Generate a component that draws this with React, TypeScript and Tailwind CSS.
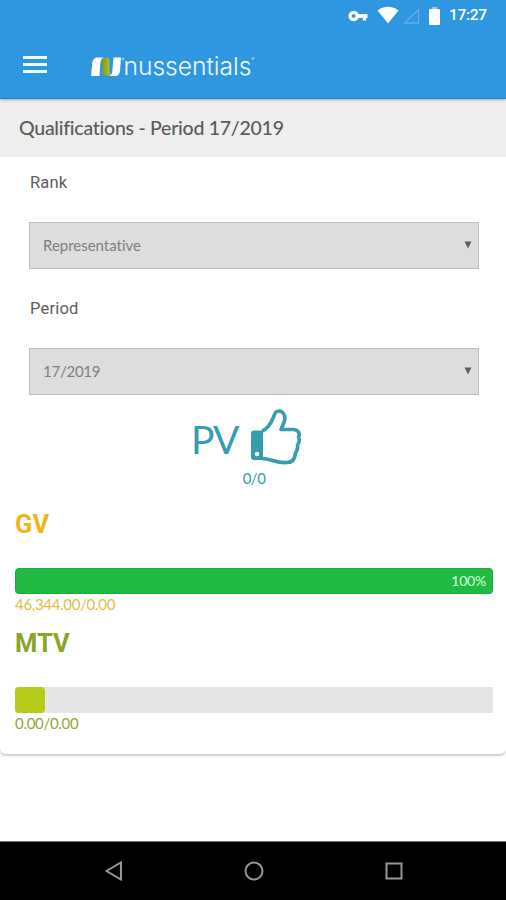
import React from 'react';

interface SelectFieldProps {
  label: string;
  value: string;
  valueClass: string;
}

const SelectField: React.FC<SelectFieldProps> = ({ label, value, valueClass }) => {
  return (
    <div className="h-[126px] px-[29px] pt-[14px]">
      <div className="h-6 pl-px font-[Roboto] text-[16.5px] leading-6 tracking-[0.2px] text-[#5c5c5c]">{label}</div>
      <button className="mt-[27px] flex h-[47px] w-[450px] items-center justify-between border border-[#bcbcbc] bg-[#dddddd] pr-[6px] pl-[13px] text-[#808080]">
        <span className={valueClass}>{value}</span>
        <svg className="mb-px" width="8" height="8" viewBox="0 0 8 8" fill="#606060">
          <path d="M0.5 0.5h7L4 7.5z" />
        </svg>
      </button>
    </div>
  );
};

const StatusBar: React.FC = () => {
  return (
    <div className="flex h-8 items-center pr-[18px] pl-[348px] text-white">
      <svg width="20" height="12" viewBox="0 0 20 12" fill="none" stroke="currentColor">
        <circle cx="5.7" cy="6" r="3.6" strokeWidth="3.4" />
        <path d="M9 6h10.5" strokeWidth="3.8" />
        <path d="M16.4 6v4.5" strokeWidth="3.4" />
      </svg>
      <svg className="-mt-[2px] ml-[9px]" width="22" height="18" viewBox="0 0 22 18" fill="currentColor">
        <path d="M0.5 4.5C6.5-.5 15.5-.5 21.5 4.5L11 17.5z" />
      </svg>
      <svg className="-mt-[1px] ml-1" width="17" height="16" viewBox="0 0 17 16" fill="none" stroke="#64afe8" strokeWidth="1.3">
        <path d="M1.5 15L15.5 1.5V15z" />
      </svg>
      <svg className="-mt-[1px] ml-[9px]" width="11" height="18" viewBox="0 0 11 18" fill="currentColor">
        <path d="M3 0h5v2.5H3z" opacity=".5" />
        <rect y="2" width="11" height="16" rx="1" />
      </svg>
      <span className="ml-[9px] font-[Roboto] text-[15.5px] font-medium tracking-[-0.3px]">17:27</span>
    </div>
  );
};

const Logo: React.FC = () => {
  return (
    <svg width="170" height="38" viewBox="0 -6 170 38">
      <defs>
        <linearGradient id="band" x1="0" y1="0" x2="1" y2="0">
          <stop offset="0" stopColor="#7c9a20" />
          <stop offset="1" stopColor="#bac62b" />
        </linearGradient>
      </defs>
      <path d="M0 22L1.200 9Q2 3.500 6.500 3.500H12.500Q9.500 5 9.200 10L8.500 22z" fill="#fff" />
      <path d="M11 6.500Q12 3.500 15 3.500Q18.800 3.500 18.500 8V15.500Q18.500 19.500 20 21.500H14.500Q11 20.500 11 16z" fill="url(#band)" />
      <path d="M22.500 3.500h7.500l-1 13.500Q28.300 22 24 22h-5.500Q21.300 20.500 21.500 15.500z" fill="#fff" />
      <text x="32.500" y="21" fill="#effaff" fontFamily="Inter, sans-serif" fontSize="24" fontWeight="300" textLength="128" lengthAdjust="spacingAndGlyphs">
        nussentials
      </text>
      <circle cx="32" cy="5" r="1" fill="none" stroke="#d5ecfb" strokeWidth=".7" />
      <circle cx="162" cy="4.500" r="1" fill="none" stroke="#d5ecfb" strokeWidth=".7" />
    </svg>
  );
};

const AppBar: React.FC = () => {
  return (
    <div className="flex h-[66px] items-center pl-[23px]">
      <svg width="24" height="18" viewBox="0 0 24 18" fill="#eefbff">
        <path d="M0 0h24v3H0zM0 7h24v3H0zM0 14h24v3H0z" />
      </svg>
      <div className="ml-[43.5px] pt-[3px]">
        <Logo />
      </div>
    </div>
  );
};

const ThumbsUp: React.FC = () => {
  return (
    <svg width="52" height="56" viewBox="0 0 52 56" fill="none">
      <path
        d="M12 22C18 20 22 12 24 7C25 3 26 2 29 2C33 2 36 7 34.500 12L31 20.500H43C49 20.500 50 25 48.500 28C50 31 49 34 47.500 36C48 39 47 42 45.500 44C45 50 42 53.500 37 53.500C26 54.500 21 49.500 12 49.500"
        stroke="#369dad"
        strokeWidth="3.600"
        strokeLinejoin="round"
      />
      <path d="M4 21.500h9v29.500H4Q1 51 1 48V24.500Q1 21.500 4 21.500z" fill="#369dad" />
      <circle cx="7" cy="45" r="2.200" fill="#fff" />
    </svg>
  );
};

interface MeterProps {
  title: string;
  value: string;
  titleClass: string;
  valueClass: string;
  bar: React.ReactNode;
}

const Meter: React.FC<MeterProps> = ({ title, value, titleClass, valueClass, bar }) => {
  return (
    <div className="h-[119px] pr-[13px] pl-[15px]">
      <h2 className={`h-8 font-[Roboto] text-[25.5px] leading-8 font-bold ${titleClass}`}>{title}</h2>
      <div className="mt-[28px] flex h-[26px] bg-[#e6e6e6]">{bar}</div>
      <p className={`h-5 text-[15px] leading-5 tracking-[-0.3px] ${valueClass}`}>{value}</p>
    </div>
  );
};

const NavigationBar: React.FC = () => {
  return (
    <div className="flex h-[59px] items-center justify-between border-t border-[#777] bg-black pr-[103px] pl-[105px]">
      <svg width="18" height="20" viewBox="0 0 18 20" fill="none" stroke="#969696" strokeWidth="2">
        <path d="M16 1.500v17L1.500 10z" />
      </svg>
      <svg width="20" height="20" viewBox="0 0 20 20" fill="none" stroke="#969696" strokeWidth="2">
        <circle cx="10" cy="10" r="8.500" />
      </svg>
      <svg width="18" height="18" viewBox="0 0 18 18" fill="none" stroke="#969696" strokeWidth="2">
        <rect x="1.500" y="1.500" width="15" height="15" />
      </svg>
    </div>
  );
};

const App: React.FC = () => {
  return (
    <div className="flex h-[900px] w-[506px] flex-col overflow-hidden bg-white font-[Lato]">
      <header className="relative h-[99px] shrink-0 border-b border-[#2583c4] bg-[#2f97df] shadow-[0_1px_3px_rgba(0,0,0,0.3)]">
        <StatusBar />
        <AppBar />
      </header>
      <main className="h-[656px] shrink-0 rounded-b-md border-b border-[#cfcfcf] shadow-[0_1px_2px_rgba(0,0,0,0.2)]">
        <h1 className="flex h-[58px] items-center bg-[#eeeeee] pl-[19px] text-[19.5px] font-medium tracking-[-0.26px] text-[#5b5b5b]">
          Qualifications - Period 17/2019
        </h1>
        <SelectField label="Rank" value="Representative" valueClass="text-[15px] tracking-[-0.02px]" />
        <SelectField label="Period" value="17/2019" valueClass="text-[15px] tracking-[-0.25px]" />
        <div className="h-[99px] text-[#369dad]">
          <div className="flex h-[56px] items-end pl-[191px]">
            <span className="w-[59px] text-[39px] leading-[52px] tracking-[-1px]">PV</span>
            <ThumbsUp />
          </div>
          <p className="pt-px pl-[2px] text-center text-[15px] leading-6 tracking-[-0.5px]">0/0</p>
        </div>
        <Meter
          title="GV"
          value="46,344.00/0.00"
          titleClass="text-[#efb517]"
          valueClass="text-[#dfbd3f]"
          bar={
            <div className="flex w-full items-center justify-end rounded border border-[#1cab39] bg-[#21ba42] pr-[6px] pb-[2px] text-[14px] tracking-[-0.2px] text-[#d9ffe0]">
              100%
            </div>
          }
        />
        <Meter
          title="MTV"
          value="0.00/0.00"
          titleClass="text-[#88a526]"
          valueClass="text-[#91a83b]"
          bar={<div className="w-[30px] rounded bg-[#b5cc18]" />}
        />
      </main>
      <div className="mt-auto">
        <NavigationBar />
      </div>
    </div>
  );
};

export default App;
